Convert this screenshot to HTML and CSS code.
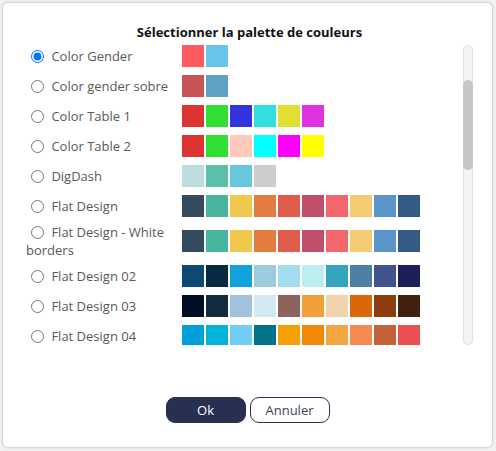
FILE: index.html
```html
<!DOCTYPE html>
<html lang="fr">
<head>
<meta charset="utf-8">
<title>Palette</title>
<link rel="stylesheet" href="styles.css">
</head>
<body>
<div class="dialog">
  <h1 class="title">Sélectionner la palette de couleurs</h1>
  <div class="list-wrap">
    <div class="list">
      <label class="name"><input type="radio" name="pal" checked> <span>Color Gender</span></label>
      <div class="swatches"><i style="background:#fe5a60"></i><i style="background:#6bc4ea"></i></div>

      <label class="name"><input type="radio" name="pal"> <span>Color gender sobre</span></label>
      <div class="swatches"><i style="background:#c95457"></i><i style="background:#5ea3c4"></i></div>

      <label class="name"><input type="radio" name="pal"> <span>Color Table 1</span></label>
      <div class="swatches"><i style="background:#de3333"></i><i style="background:#33de33"></i><i style="background:#3333de"></i><i style="background:#33dede"></i><i style="background:#dede33"></i><i style="background:#de33de"></i></div>

      <label class="name"><input type="radio" name="pal"> <span>Color Table 2</span></label>
      <div class="swatches"><i style="background:#de3333"></i><i style="background:#33de33"></i><i style="background:#ffc9bc"></i><i style="background:#00ffff"></i><i style="background:#ff00ff"></i><i style="background:#ffff00"></i></div>

      <label class="name"><input type="radio" name="pal"> <span>DigDash</span></label>
      <div class="swatches"><i style="background:#bedcdc"></i><i style="background:#5abfab"></i><i style="background:#66c8dc"></i><i style="background:#cccccc"></i></div>

      <label class="name"><input type="radio" name="pal"> <span>Flat Design</span></label>
      <div class="swatches"><i style="background:#344a5d"></i><i style="background:#48b59e"></i><i style="background:#f0c84e"></i><i style="background:#e47b40"></i><i style="background:#e15d4b"></i><i style="background:#c04f6b"></i><i style="background:#f1676b"></i><i style="background:#f5cc74"></i><i style="background:#5b94c8"></i><i style="background:#345b86"></i></div>

      <label class="name name-wrap"><input type="radio" name="pal"> <span>Flat Design - White borders</span></label>
      <div class="swatches"><i style="background:#344a5d"></i><i style="background:#48b59e"></i><i style="background:#f0c84e"></i><i style="background:#e47b40"></i><i style="background:#e15d4b"></i><i style="background:#c04f6b"></i><i style="background:#f1676b"></i><i style="background:#f5cc74"></i><i style="background:#5b94c8"></i><i style="background:#345b86"></i></div>

      <label class="name"><input type="radio" name="pal"> <span>Flat Design 02</span></label>
      <div class="swatches"><i style="background:#0c4a73"></i><i style="background:#082a42"></i><i style="background:#12a2dc"></i><i style="background:#9ccbe0"></i><i style="background:#a4dcf0"></i><i style="background:#bdedf0"></i><i style="background:#32a5c0"></i><i style="background:#4f7fa7"></i><i style="background:#43538c"></i><i style="background:#1c1f59"></i></div>

      <label class="name"><input type="radio" name="pal"> <span>Flat Design 03</span></label>
      <div class="swatches"><i style="background:#010f26"></i><i style="background:#122b3f"></i><i style="background:#a0c2da"></i><i style="background:#d2e8f3"></i><i style="background:#8d635c"></i><i style="background:#f39f37"></i><i style="background:#f2d4ac"></i><i style="background:#da6806"></i><i style="background:#8d3c0d"></i><i style="background:#41200f"></i></div>

      <label class="name"><input type="radio" name="pal"> <span>Flat Design 04</span></label>
      <div class="swatches"><i style="background:#029fdb"></i><i style="background:#02b3dc"></i><i style="background:#71cdf2"></i><i style="background:#03728d"></i><i style="background:#f5a002"></i><i style="background:#f28805"></i><i style="background:#f3a443"></i><i style="background:#f58950"></i><i style="background:#c2613a"></i><i style="background:#e95050"></i></div>

      <label class="name"><input type="radio" name="pal"> <span>Flat Design 05</span></label>
      <div class="swatches"><i style="background:#2c3e50"></i><i style="background:#e74c3c"></i><i style="background:#ecf0f1"></i><i style="background:#3498db"></i><i style="background:#2980b9"></i><i style="background:#16a085"></i><i style="background:#f39c12"></i><i style="background:#d35400"></i><i style="background:#8e44ad"></i><i style="background:#27ae60"></i></div>

      <label class="name"><input type="radio" name="pal"> <span>Pastel</span></label>
      <div class="swatches"><i style="background:#fbb4ae"></i><i style="background:#b3cde3"></i><i style="background:#ccebc5"></i><i style="background:#decbe4"></i><i style="background:#fed9a6"></i><i style="background:#ffffcc"></i></div>
    </div>
    <div class="scrollbar"><div class="thumb"></div></div>
  </div>
  <div class="actions">
    <button class="btn btn-primary" type="button">Ok</button>
    <button class="btn btn-secondary" type="button">Annuler</button>
  </div>
</div>
</body>
</html>
```

FILE: styles.css
```css
* { box-sizing: border-box; }

html, body {
  margin: 0;
  height: 100%;
}

body {
  background: #f3f3f3;
  padding: 2px 3px 3px 2px;
  font-family: "Open Sans", "Noto Sans", sans-serif;
}

.dialog {
  width: 491px;
  height: 446px;
  background: #ffffff;
  border: 1px solid #d6d6d6;
  border-radius: 6px;
  box-shadow: 0 0 3px rgba(0, 0, 0, 0.12);
  padding: 20px 19px 0 23px;
  display: flex;
  flex-direction: column;
}

.title {
  margin: 0 0 4px 0;
  font-size: 13px;
  line-height: 18px;
  font-weight: 700;
  color: #111111;
  text-align: center;
}

.list-wrap {
  display: flex;
  height: 300px;
}

.list {
  flex: 1;
  overflow-y: auto;
  scrollbar-width: none;
  display: grid;
  grid-template-columns: 150px auto;
  column-gap: 6px;
  row-gap: 8px;
  align-items: center;
  align-content: start;
}

.name {
  font-size: 13px;
  line-height: 17px;
  color: #595959;
  cursor: pointer;
}

.name-wrap {
  line-height: 18px;
  margin: -2px 0;
}

.name input {
  width: 13px;
  height: 13px;
  margin: 0 4px 0 5px;
  vertical-align: -2px;
}

.swatches {
  display: flex;
  gap: 2px;
}

.swatches i {
  display: block;
  width: 22px;
  height: 22px;
}

.scrollbar {
  width: 10px;
  height: 300px;
  margin-left: 10px;
  border: 1px solid #e0e0e0;
  border-radius: 5px;
  background: #f4f4f4;
}

.thumb {
  margin-top: 34px;
  height: 90px;
  margin-left: -1px;
  margin-right: -1px;
  border-radius: 5px;
  background: #c6c6c6;
}

.actions {
  display: flex;
  justify-content: center;
  gap: 4px;
  margin-top: 52px;
  margin-left: -4px;
}

.btn {
  width: 80px;
  height: 26px;
  font-family: "Open Sans", "Noto Sans", sans-serif;
  font-size: 13px;
  border-radius: 9px;
  cursor: pointer;
  padding: 0;
}

.btn-primary {
  background: #283052;
  color: #ffffff;
  border: 1px solid #283052;
}

.btn-secondary {
  background: #ffffff;
  color: #3a3f58;
  border: 1px solid #283052;
}
```
